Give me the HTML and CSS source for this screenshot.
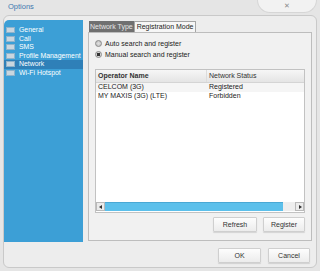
FILE: index.html
```html
<!DOCTYPE html>
<html lang="en">
<head>
  <meta charset="UTF-8">
  <title>Options</title>
  <link rel="stylesheet" href="styles.css">
</head>
<body>
  <div class="titlebar">
    <div class="title">Options</div>
    <div class="close">&#x2715;</div>
  </div>

  <div class="panel">
    <div class="main">
      <ul class="sidebar">
        <li><span class="ico"></span>General</li>
        <li><span class="ico"></span>Call</li>
        <li><span class="ico"></span>SMS</li>
        <li><span class="ico"></span>Profile Management</li>
        <li class="active"><span class="ico"></span>Network</li>
        <li><span class="ico"></span>Wi-Fi Hotspot</li>
      </ul>

      <div class="content">
        <div class="tabs">
          <div class="tab selected">Network Type</div>
          <div class="tab">Registration Mode</div>
        </div>
        <div class="page">
          <label class="radio"><span class="dot"></span>Auto search and register</label>
          <label class="radio"><span class="dot on"></span>Manual search and register</label>

          <div class="list">
            <div class="row head">
              <div class="col1">Operator Name</div>
              <div class="col2">Network Status</div>
            </div>
            <div class="rows">
              <div class="row first">
                <div class="col1">CELCOM (3G)</div>
                <div class="col2">Registered</div>
              </div>
              <div class="row">
                <div class="col1">MY MAXIS (3G) (LTE)</div>
                <div class="col2">Forbidden</div>
              </div>
            </div>
            <div class="hscroll">
              <div class="arrow left"></div>
              <div class="thumb"></div>
              <div class="track"></div>
              <div class="arrow right"></div>
            </div>
          </div>

          <div class="actions">
            <button class="btn refresh">Refresh</button>
            <button class="btn register">Register</button>
          </div>
        </div>
      </div>
    </div>

    <div class="footer">
      <button class="btn ok">OK</button>
      <button class="btn cancel">Cancel</button>
    </div>
  </div>
</body>
</html>
```

FILE: styles.css
```css
body {
  margin: 0;
  width: 320px;
  height: 271px;
  overflow: hidden;
  background: #e5e5e5;
  font-family: "Liberation Sans", Arial, sans-serif;
  font-size: 7px;
  color: #222;
}

.titlebar {
  height: 15px;
  display: flex;
  justify-content: space-between;
  align-items: flex-start;
}

.title {
  margin: 2px 0 0 8px;
  font-size: 7.5px;
  color: #3d78b0;
}

.close {
  width: 60px;
  height: 13px;
  margin-right: 3px;
  box-sizing: border-box;
  border: 1px solid #d6d6d6;
  border-top: none;
  border-radius: 0 0 14px 14px;
  background: #f2f2f2;
  color: #8a8a8a;
  font-size: 7px;
  text-align: center;
  line-height: 12px;
}

.panel {
  margin: 0 3px;
  height: 253px;
  box-sizing: border-box;
  border: 1px solid #c9c9c9;
  border-radius: 6px;
  background: #ededed;
  padding: 4px 4px 0 0;
}

.main {
  display: flex;
  gap: 5px;
}

.sidebar {
  list-style: none;
  margin: 0;
  padding: 6px 0 0;
  width: 79px;
  height: 222px;
  box-sizing: border-box;
  background: #3c9fd6;
  border-radius: 5px 0 0 0;
}

.sidebar li {
  height: 8.5px;
  line-height: 8.5px;
  color: #fff;
  display: flex;
  align-items: center;
  white-space: nowrap;
  font-size: 6.9px;
}

.sidebar li.active {
  background: #2f80b8;
}

.ico {
  width: 7px;
  height: 4px;
  margin: 0 4px 0 2px;
  background: #c9d6df;
  border: 0.5px solid #8fb3cb;
}

.content {
  width: 224px;
  margin-top: 1px;
  display: flex;
  flex-direction: column;
}

.tabs {
  display: flex;
  height: 11px;
  padding-left: 1px;
}

.tab {
  height: 11px;
  box-sizing: border-box;
  line-height: 10px;
  padding: 0 2px;
  border: 1px solid #a5a5a5;
  border-bottom: none;
  background: #f6f6f6;
  color: #222;
  white-space: nowrap;
}

.tab.selected {
  background: #707070;
  border-color: #707070;
  color: #e6e6e6;
  padding: 0;
}

.page {
  height: 209px;
  box-sizing: border-box;
  border: 1px solid #bdbdbd;
  background: #f1f1f1;
  padding: 5px 6px 0;
}

.radio {
  display: flex;
  align-items: center;
  height: 11px;
  color: #222;
}

.dot {
  width: 7px;
  height: 7px;
  box-sizing: border-box;
  border-radius: 50%;
  border: 1px solid #8a8a8a;
  background: radial-gradient(circle, #e0e0e0, #bdbdbd);
  margin-right: 3px;
}

.dot.on {
  background: radial-gradient(circle, #333 0 1.6px, #d6d6d6 2px);
}

.list {
  margin-top: 9px;
  height: 144px;
  box-sizing: border-box;
  border: 1px solid #c2c2c2;
  background: #fff;
  display: flex;
  flex-direction: column;
}

.row {
  display: flex;
  height: 8.5px;
  line-height: 8.5px;
  padding-left: 2px;
  color: #1a1a1a;
}

.row.first {
  background: #f5f5f5;
}

.row.head {
  height: 12px;
  line-height: 12px;
  background: linear-gradient(#f6f6f6, #e4e4e4);
  border-bottom: 1px solid #d4d4d4;
  color: #333;
}

.row.head .col1 {
  font-weight: bold;
}

.row.head .col2 {
  border-left: 1px solid #dcdcdc;
  padding-left: 2px;
}

.col1 {
  width: 108px;
}

.col2 {
  padding-left: 3px;
}

.rows {
  flex: 1;
}

.hscroll {
  display: flex;
  height: 10px;
}

.arrow {
  width: 9px;
  height: 9px;
  box-sizing: border-box;
  border: 1px solid #b9b9b9;
  background: #ebebeb;
  position: relative;
}

.arrow::after {
  content: "";
  position: absolute;
  top: 2px;
  border-top: 2px solid transparent;
  border-bottom: 2px solid transparent;
}

.arrow.left::after {
  left: 2px;
  border-right: 3px solid #333;
}

.arrow.right::after {
  left: 3px;
  border-left: 3px solid #333;
}

.thumb {
  width: 178px;
  height: 9px;
  box-sizing: border-box;
  background: #5cc0eb;
  border-top: 1px solid #4aa8d4;
}

.track {
  flex: 1;
  height: 9px;
  background: #eeeeee;
}

.actions {
  display: flex;
  justify-content: flex-end;
  gap: 6px;
  margin-top: 4px;
}

.btn {
  height: 15px;
  box-sizing: border-box;
  padding: 0;
  border: 1px solid #cfcfcf;
  border-radius: 1px;
  background: linear-gradient(#fdfdfd, #ececec);
  box-shadow: 0 1px 1px rgba(0,0,0,0.12);
  font-family: "Liberation Sans", Arial, sans-serif;
  font-size: 7px;
  color: #333;
}

.refresh { width: 44px; }
.register { width: 42px; }

.footer {
  display: flex;
  justify-content: flex-end;
  gap: 7px;
  margin-top: 6px;
  padding-right: 2px;
}

.ok { width: 43px; }
.cancel { width: 42px; }
```
